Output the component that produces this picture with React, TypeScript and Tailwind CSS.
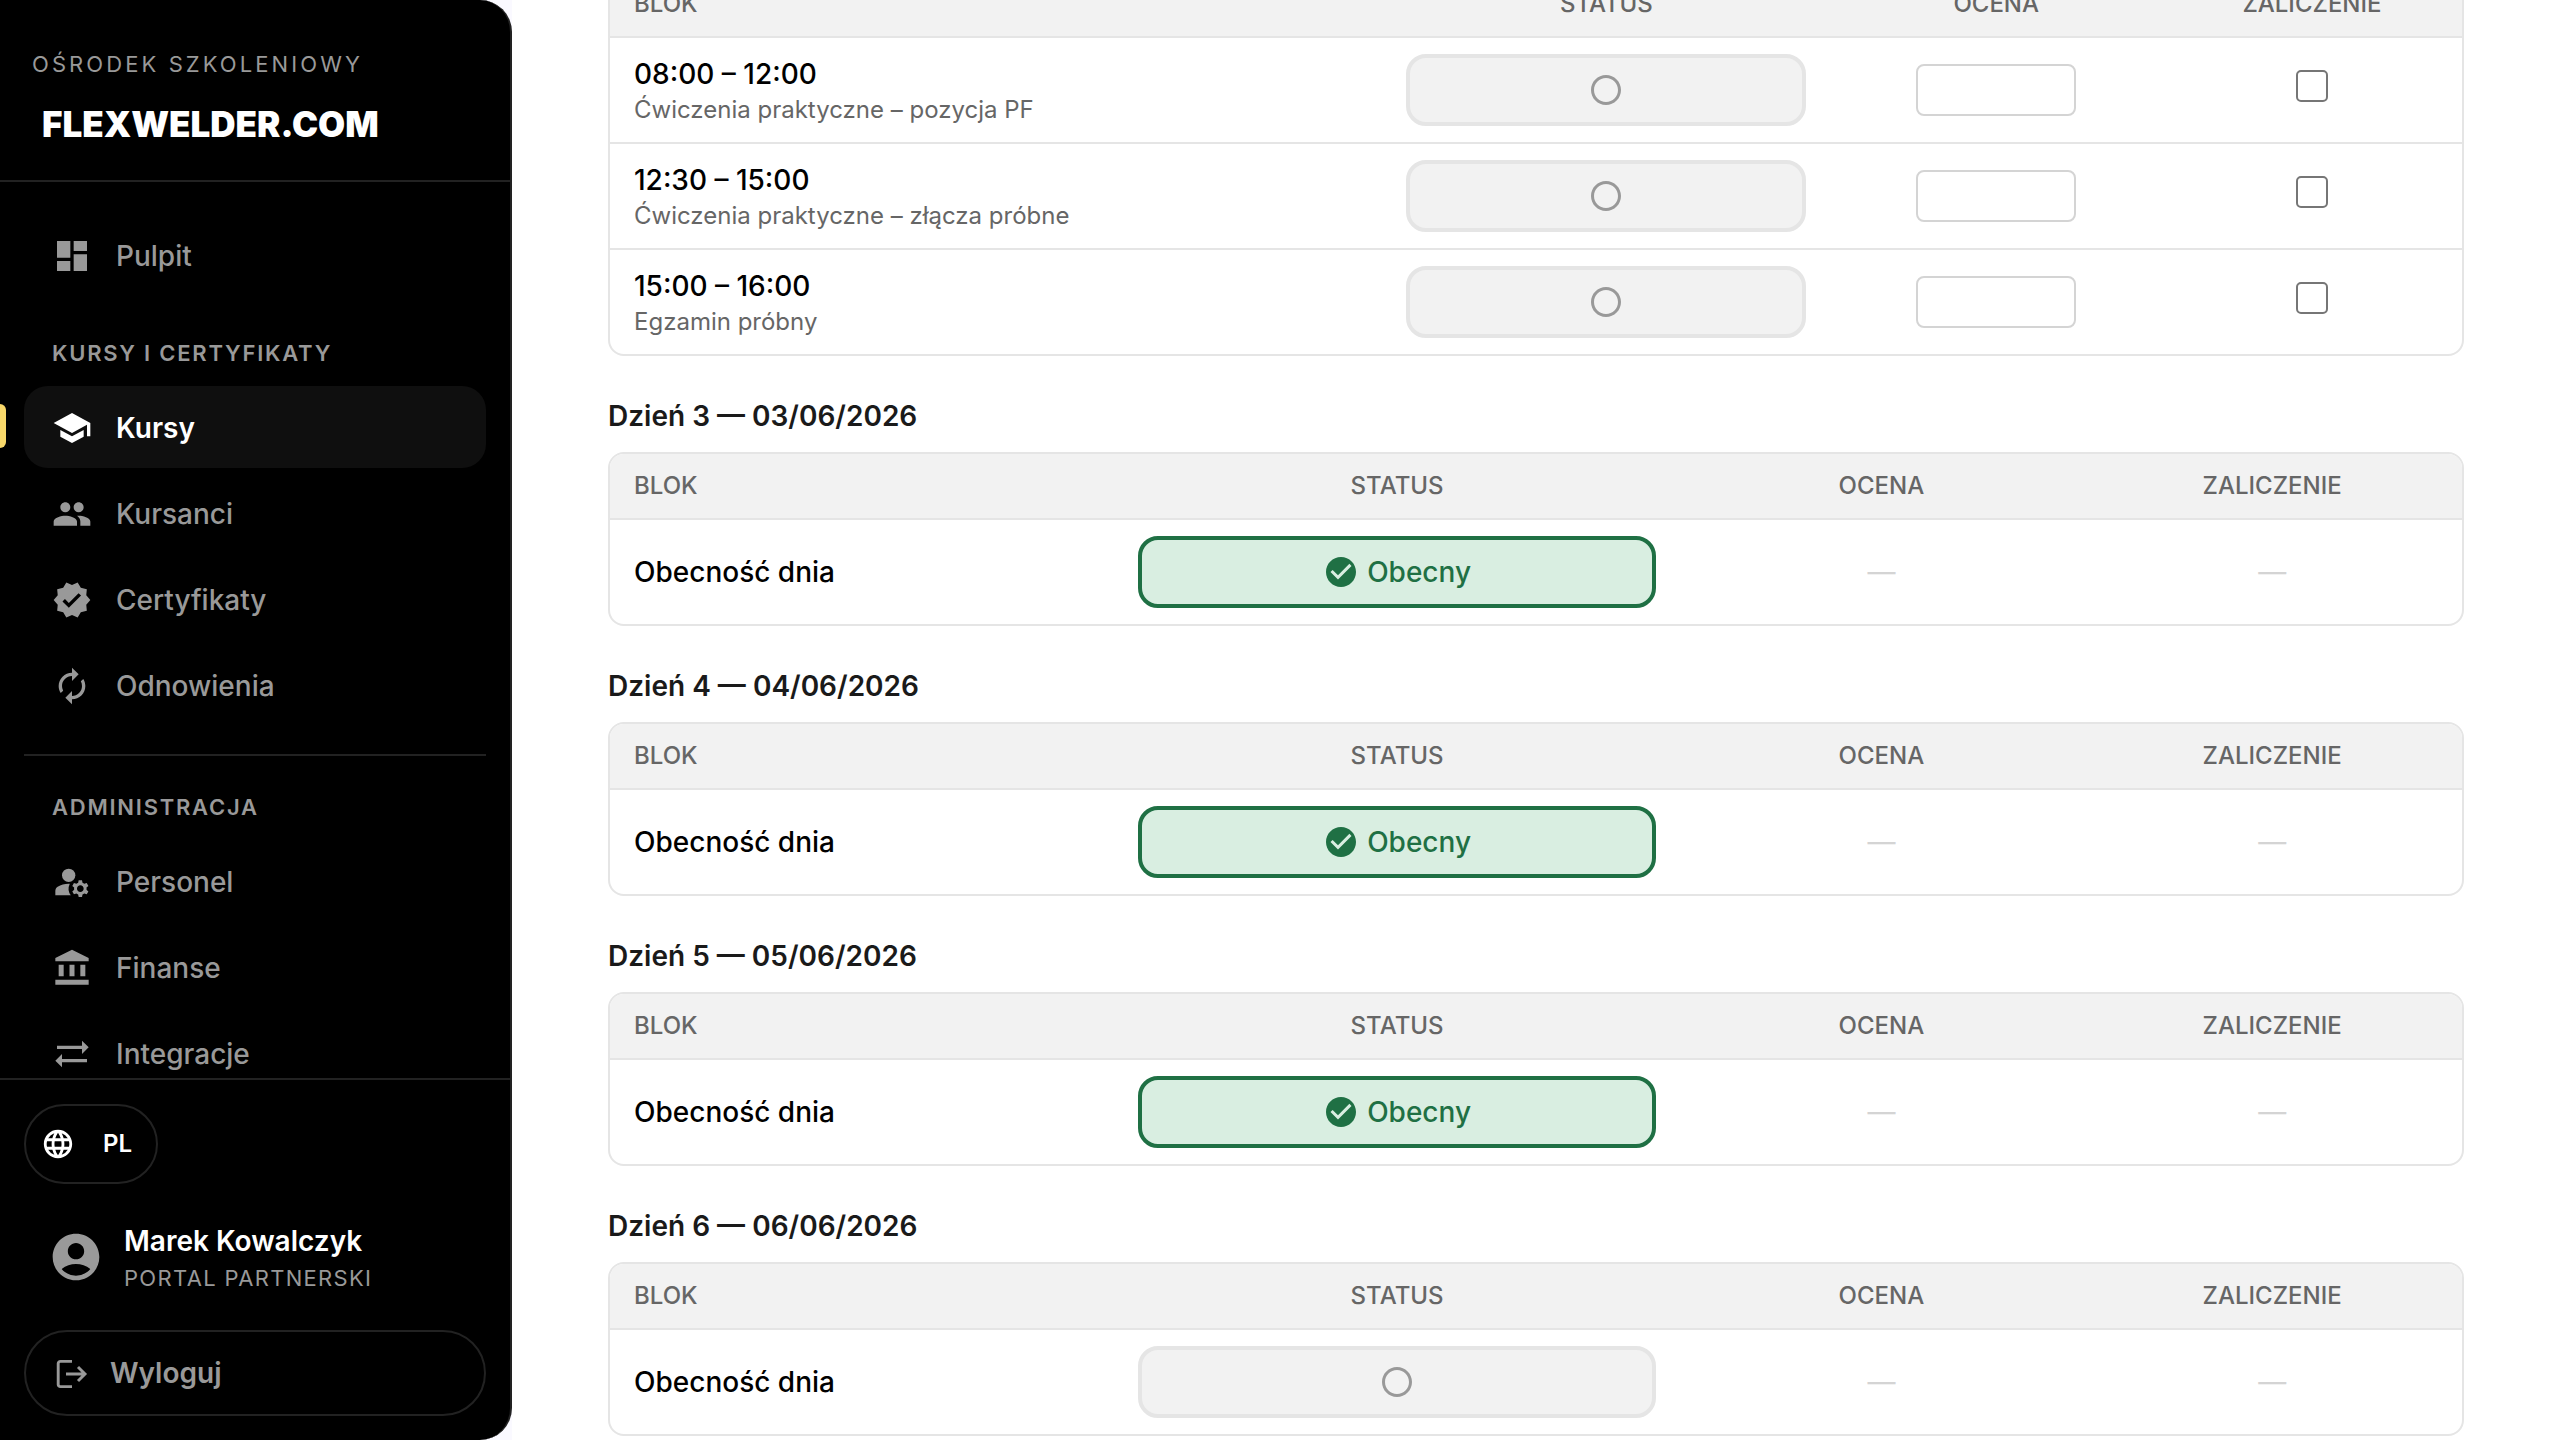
import { useState } from "react";
import type { ReactNode } from "react";
import type { IconType } from "react-icons";
import {
  MdAccountBalance,
  MdAccountCircle,
  MdAutorenew,
  MdCheckCircle,
  MdDashboard,
  MdLanguage,
  MdManageAccounts,
  MdPeople,
  MdRadioButtonUnchecked,
  MdSchool,
  MdSyncAlt,
  MdVerified,
} from "react-icons/md";

type Block = { title: string; note?: string };
type Day = { id: number; date: string; present: boolean };

const practiceBlocks: Block[] = [
  { title: "08:00 – 12:00", note: "Ćwiczenia praktyczne – pozycja PF" },
  { title: "12:30 – 15:00", note: "Ćwiczenia praktyczne – złącza próbne" },
  { title: "15:00 – 16:00", note: "Egzamin próbny" },
];

const days: Day[] = [
  { id: 3, date: "03/06/2026", present: true },
  { id: 4, date: "04/06/2026", present: true },
  { id: 5, date: "05/06/2026", present: true },
  { id: 6, date: "06/06/2026", present: false },
];

export default function App() {
  return (
    <div className="flex h-screen overflow-hidden bg-white font-['Inter',sans-serif] text-[28px] leading-[42px] text-black">
      <div className="shrink-0 bg-[#faf9ff]">
        <Sidebar />
      </div>
      <main className="min-w-0 flex-1 overflow-hidden px-24">
        {/* scrolled so that only the lower half of the first header shows */}
        <div className="-mt-[30px] flex flex-col">
          <PracticeTable />
          {days.map((d) => (
            <DaySection key={d.id} day={d} />
          ))}
        </div>
      </main>
    </div>
  );
}

function Sidebar() {
  return (
    <aside className="flex h-full w-[512px] flex-col overflow-hidden rounded-r-[32px] border-r-2 border-[#222] bg-black text-[#999]">
      <div className="border-b-2 border-[#222] px-8 pt-12 pb-9">
        <div className="text-[22px] leading-8 tracking-[0.14em]">OŚRODEK SZKOLENIOWY</div>
        <a href="#" className="mt-6 block px-[10px] text-[35px] leading-10 font-black text-white">
          FLEXWELDER.COM
        </a>
      </div>

      <nav className="min-h-0 flex-1 overflow-hidden px-6 pt-8">
        <NavItem icon={MdDashboard} label="Pulpit" />
        <NavGroup title="Kursy i certyfikaty" className="pt-[41px]">
          <NavItem icon={MdSchool} label="Kursy" active />
          <NavItem icon={MdPeople} label="Kursanci" />
          <NavItem icon={MdVerified} label="Certyfikaty" />
          <NavItem icon={MdAutorenew} label="Odnowienia" />
        </NavGroup>
        <NavGroup title="Administracja" className="mt-7 border-t-2 border-[#222] pt-[35px]">
          <NavItem icon={MdManageAccounts} label="Personel" />
          <NavItem icon={MdAccountBalance} label="Finanse" />
          <NavItem icon={MdSyncAlt} label="Integracje" />
        </NavGroup>
      </nav>

      <div className="flex flex-col items-start border-t-2 border-[#222] p-6">
        <button
          type="button"
          className="flex h-20 items-center gap-7 rounded-full border-2 border-[#222] pr-6 pl-[15px] text-[24px] font-semibold text-white"
        >
          <MdLanguage size={34} />
          PL
        </button>
        <div className="flex items-center gap-5 px-6 py-9">
          <MdAccountCircle size={56} className="shrink-0" />
          <div>
            <div className="font-semibold text-white">Marek Kowalczyk</div>
            <div className="text-[22px] leading-8 tracking-[0.06em]">PORTAL PARTNERSKI</div>
          </div>
        </div>
        <button
          type="button"
          className="flex w-full items-center gap-[18px] rounded-full border-2 border-[#222] px-[26px] py-5 font-semibold"
        >
          <LogoutIcon />
          Wyloguj
        </button>
      </div>
    </aside>
  );
}

function NavGroup(props: { title: string; className: string; children: ReactNode }) {
  return (
    <section className={props.className}>
      <h2 className="mb-[17px] px-7 text-[22px] leading-8 font-semibold tracking-[0.08em] uppercase">
        {props.title}
      </h2>
      <div className="flex flex-col gap-1">{props.children}</div>
    </section>
  );
}

function NavItem(props: { icon: IconType; label: string; active?: boolean }) {
  const { icon: Icon, label, active } = props;
  return (
    <a
      href="#"
      aria-current={active ? "page" : undefined}
      className={
        active
          ? "relative flex items-center gap-6 rounded-[24px] bg-[#0f0f0f] px-7 pt-[21px] pb-[19px] font-semibold text-white"
          : "flex items-center gap-6 rounded-[24px] px-7 pt-[21px] pb-[19px] font-medium"
      }
    >
      {active ? (
        <span className="absolute top-[18px] -left-6 h-11 w-[6px] rounded-r-[6px] bg-[#f8d86a]" />
      ) : null}
      <Icon size={40} className="shrink-0" />
      {label}
    </a>
  );
}

function LogoutIcon() {
  return (
    <svg width="40" height="40" viewBox="0 0 40 40" fill="none" stroke="currentColor" strokeWidth="2.9">
      <path d="M20 8.4H8.4a2.2 2.2 0 0 0-2.2 2.2v20.8a2.2 2.2 0 0 0 2.2 2.2H20" />
      <path d="M14 21h19M26 14l7 7-7 7" />
    </svg>
  );
}

function PracticeTable() {
  return (
    <DayTable cols={["w-[41.7%]", "w-[24.2%]", "w-[17.9%]"]}>
      {practiceBlocks.map((b) => (
        <tr key={b.title}>
          <Cell>
            <div className="leading-10 font-medium">{b.title}</div>
            <div className="text-[24px] leading-8 text-[#666]">{b.note}</div>
          </Cell>
          <Cell>
            <StatusButton label={b.title} />
          </Cell>
          <Cell>
            <input
              type="text"
              aria-label={`Ocena ${b.title}`}
              className="mx-auto block h-[52px] w-40 rounded-[8px] border-2 border-[#d4d4d4] px-3 text-center"
            />
          </Cell>
          <Cell>
            <input
              type="checkbox"
              aria-label={`Zaliczenie ${b.title}`}
              className="mx-auto mb-2 block size-8 appearance-none rounded-[5px] border-2 border-[#767676] bg-white checked:bg-[#1f7044]"
            />
          </Cell>
        </tr>
      ))}
    </DayTable>
  );
}

function DaySection({ day }: { day: Day }) {
  return (
    <section className="pt-[39px]">
      <h3 className="pb-[15px] font-semibold text-[#1a1a1a]">
        Dzień {day.id} — {day.date}
      </h3>
      <DayTable cols={["w-[27.2%]", "w-[30.6%]", "w-[21.7%]"]}>
        <tr>
          <Cell>
            <span className="font-medium">Obecność dnia</span>
          </Cell>
          <Cell>
            <StatusButton label={`Dzień ${day.id}`} initial={day.present} />
          </Cell>
          <Cell>
            <div className="text-center text-[#d4d4d4]">—</div>
          </Cell>
          <Cell>
            <div className="text-center text-[#d4d4d4]">—</div>
          </Cell>
        </tr>
      </DayTable>
    </section>
  );
}

function DayTable({ cols, children }: { cols: string[]; children: ReactNode }) {
  return (
    <div className="overflow-hidden rounded-[16px] border-2 border-[#e5e5e5]">
      <table className="w-full table-fixed border-separate border-spacing-0 text-left">
        <thead>
          <tr className="h-16 bg-[#f2f2f2] text-[24px] text-[#666]">
            <th className={`${cols[0]} px-6 font-medium`}>BLOK</th>
            <th className={`${cols[1]} px-6 text-center font-medium`}>STATUS</th>
            <th className={`${cols[2]} px-6 text-center font-medium`}>OCENA</th>
            <th className="px-6 text-center font-medium">ZALICZENIE</th>
          </tr>
        </thead>
        <tbody>{children}</tbody>
      </table>
    </div>
  );
}

function Cell({ children }: { children: ReactNode }) {
  return <td className="border-t-2 border-[#e5e5e5] px-6 py-4">{children}</td>;
}

function StatusButton({ label, initial = false }: { label: string; initial?: boolean }) {
  const [present, setPresent] = useState(initial);

  return (
    <button
      type="button"
      aria-label={present ? undefined : `Status ${label}`}
      onClick={() => setPresent(!present)}
      className={
        present
          ? "flex h-[72px] w-full items-center justify-center gap-2 rounded-[20px] border-4 border-[#1f7044] bg-[#d9eee1] font-medium text-[#1f7044]"
          : "flex h-[72px] w-full items-center justify-center rounded-[20px] border-4 border-[#e5e5e5] bg-[#f2f2f2] text-[#999]"
      }
    >
      {present ? <MdCheckCircle size={36} /> : <MdRadioButtonUnchecked size={36} />}
      {present ? "Obecny" : null}
    </button>
  );
}
